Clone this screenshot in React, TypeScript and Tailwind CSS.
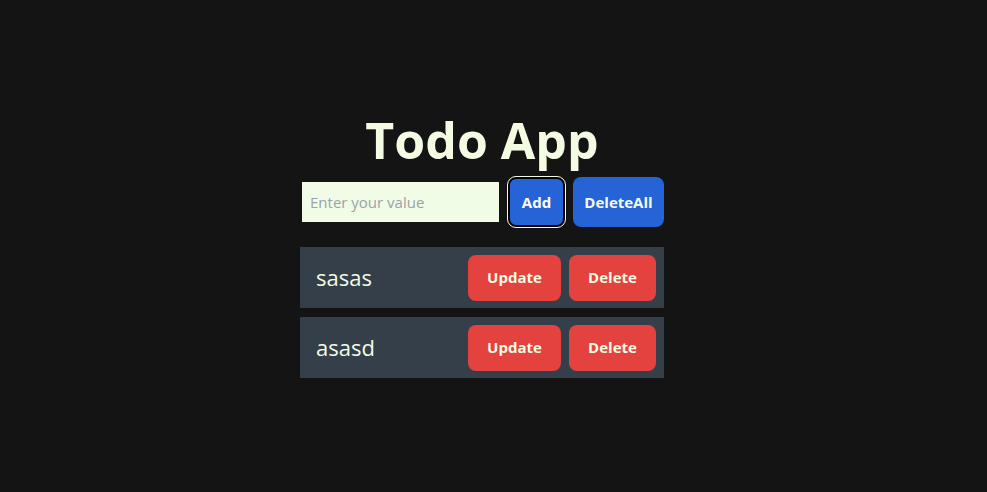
import React from "react";

const items = ["sasas", "asasd"];

export default function App() {
  return (
    <div
      className="min-h-screen w-full bg-[#141414] flex flex-col items-center justify-center pb-[4px] pr-[23px]"
      style={{ fontFamily: '"Open Sans", "Noto Sans", sans-serif' }}
    >
      <div className="w-[364px] flex flex-col items-stretch">
        <h1 className="text-center text-[50px] leading-[60px] font-bold text-[#f3fbe3] mb-[7px]">
          Todo App
        </h1>
        <div className="flex items-center h-[50px]">
          <input
            placeholder="Enter your value"
            className="ml-[2px] w-[197px] h-[40px] bg-[#f1fce6] px-[8px] text-[15px] text-[#333] placeholder:text-[#9aa3a8] outline-none"
          />
          <button className="ml-[9px] w-[57px] h-[50px] rounded-[8px] bg-[#2563d6] text-white text-[15px] font-bold border-2 border-black outline outline-1 outline-[#f3fbe3]">
            Add
          </button>
          <button className="ml-[8px] w-[91px] h-[50px] rounded-[8px] bg-[#2563d6] text-[#f3fbe3] text-[15px] font-bold">
            DeleteAll
          </button>
        </div>
        <div className="mt-[20px] flex flex-col gap-[9px]">
          {items.map((t) => (
            <div
              key={t}
              className="h-[61px] bg-[#343f4a] flex items-center pl-[16px] pr-[8px]"
            >
              <span className="flex-1 text-[22px] text-[#f3fbe3]">{t}</span>
              <button className="w-[93px] h-[46px] rounded-[8px] bg-[#e3423e] text-[#f3fbe3] text-[15px] font-bold">
                Update
              </button>
              <button className="ml-[8px] w-[87px] h-[46px] rounded-[8px] bg-[#e3423e] text-[#f3fbe3] text-[15px] font-bold">
                Delete
              </button>
            </div>
          ))}
        </div>
      </div>
    </div>
  );
}
